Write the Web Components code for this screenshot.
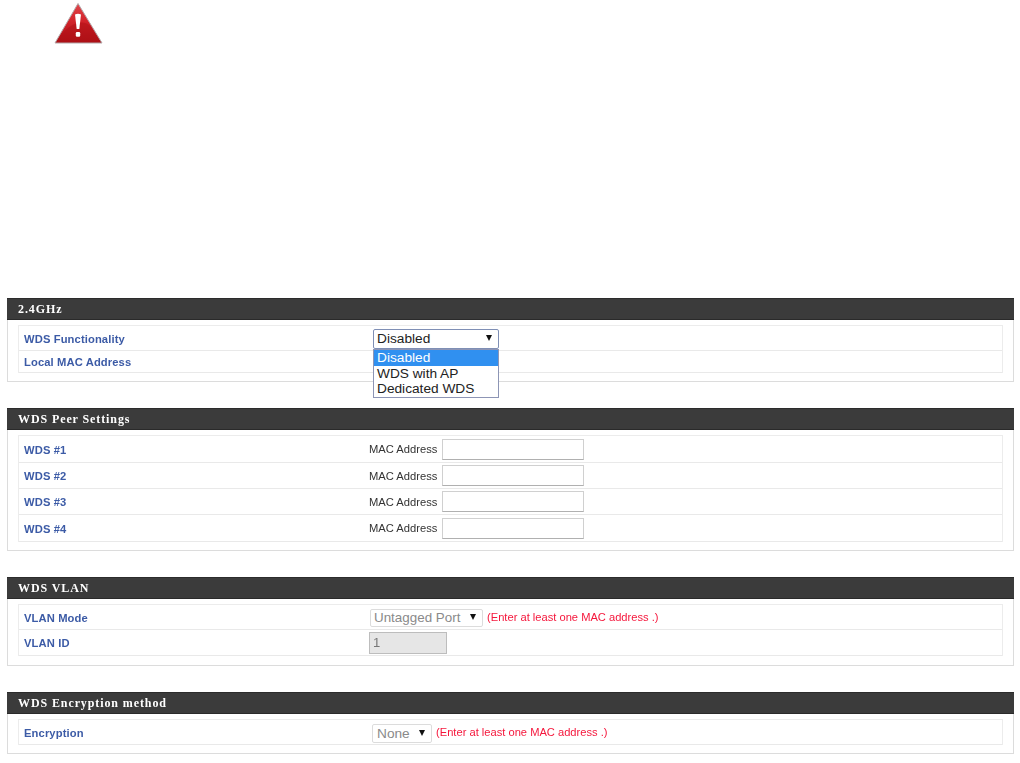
<!DOCTYPE html>
<html lang="en"><head><meta charset="utf-8"><title>WDS settings</title>
<style>
html,body{margin:0;background:#fff}
body{font-family:"Liberation Sans",Arial,sans-serif}
</style></head><body>
<wds-page>
  <wds-warning slot="top"></wds-warning>
  <wds-panel heading="2.4GHz" style="--gap:26px">
    <wds-row label="WDS Functionality" style="--h:25px">
      <wds-select value="Disabled" style="--w:126px;--x:4px;--mt:2px" options="Disabled|WDS with AP|Dedicated WDS"></wds-select>
    </wds-row>
    <wds-row label="Local MAC Address" style="--h:22px"></wds-row>
  </wds-panel>
  <wds-panel heading="WDS Peer Settings" style="--gap:26px">
    <wds-row label="WDS #1" style="--h:27px"><wds-mac></wds-mac></wds-row>
    <wds-row label="WDS #2" style="--h:26px"><wds-mac></wds-mac></wds-row>
    <wds-row label="WDS #3" style="--h:26px"><wds-mac></wds-mac></wds-row>
    <wds-row label="WDS #4" style="--h:27px"><wds-mac></wds-mac></wds-row>
  </wds-panel>
  <wds-panel heading="WDS VLAN" style="--gap:26px;--pb:9px">
    <wds-row label="VLAN Mode" style="--h:25px">
      <wds-select value="Untagged Port" disabled style="--w:113px;--x:1px;--sh:18px;--fs:13.4px;--mt:2px;--ay:4px"></wds-select><wds-note>(Enter at least one MAC address .)</wds-note>
    </wds-row>
    <wds-row label="VLAN ID" style="--h:26px"><wds-field value="1"></wds-field></wds-row>
  </wds-panel>
  <wds-panel heading="WDS Encryption method" style="--gap:0px">
    <wds-row label="Encryption" style="--h:25px">
      <wds-select value="None" disabled style="--w:60px;--x:3px;--sh:19px;--mt:2px;--tp:4px"></wds-select><wds-note>(Enter at least one MAC address .)</wds-note>
    </wds-row>
  </wds-panel>
</wds-page>
<script>
function def(name, css, html){
  customElements.define(name, class extends HTMLElement{
    connectedCallback(){
      if(this.shadowRoot) return;
      const r=this.attachShadow({mode:'open'});
      r.innerHTML='<style>'+css+'</style>'+(typeof html==='function'?html(this):html);
    }
  });
}
def('wds-page',
  ':host{display:block;width:1020px;height:763px;overflow:hidden;filter:blur(.5px)}'+
  '.top{height:298px;box-sizing:border-box;padding:2px 0 0 54px}'+
  '.main{margin:0 6px 0 7px}',
  '<div class="top"><slot name="top"></slot></div><div class="main"><slot></slot></div>');
def('wds-warning',
  ':host{display:block;width:50px;height:44px}svg{display:block}',
  `<svg width="50" height="44" viewBox="0 0 50 44" role="img" aria-label="Warning">
    <defs><linearGradient id="g" x1="0" y1="0" x2="0" y2="1">
      <stop offset="0" stop-color="#e0474c"/><stop offset=".45" stop-color="#d2232a"/><stop offset="1" stop-color="#a80f15"/></linearGradient></defs>
    <path d="M24 1.5 L48 41 H1 Z" fill="url(#g)" stroke="#b3a8aa" stroke-width="1" stroke-linejoin="round"/>
    <path d="M7 33 C16 21 30 16 37 25 L45.5 40 H3 Z" fill="#b01016" opacity=".55"/>
    <path d="M21 12.5 Q24 11 27 12.5 L25.3 27 H22.7 Z" fill="#fff"/>
    <rect x="21.8" y="30" width="4.4" height="4.8" rx="1.2" fill="#fff"/>
  </svg>`);
def('wds-panel',
  ':host{display:block;margin-bottom:var(--gap,26px)}'+
  'h2{margin:0;height:22px;box-sizing:border-box;padding:0 11px;background:#3b3b3b;border-top:1px solid #2c2c2c;border-bottom:1px solid #2a2a2a;color:#fff;'+
  'font:bold 12px/20px "Liberation Serif","Times New Roman",serif;letter-spacing:.9px}'+
  '.body{border:1px solid #dcdcdc;border-top:0;padding:5px 10px var(--pb,8px)}'+
  '.table{border:1px solid #ececec;border-bottom:0}',
  h=>`<h2>${h.getAttribute('heading')}</h2><div class="body"><div class="table"><slot></slot></div></div>`);
def('wds-row',
  ':host{display:flex;align-items:center;height:var(--h,25px);box-sizing:border-box;border-bottom:1px solid #e9e9e9}'+
  '.l{flex:0 0 350px;padding:1px 0 0 5px;box-sizing:border-box;color:#3c5ba6;font:bold 11.2px/14px "Liberation Sans",Arial,sans-serif;letter-spacing:.12px}'+
  '.v{display:flex;align-items:center;flex:1;min-width:0}',
  h=>`<div class="l">${h.getAttribute('label')}</div><div class="v"><slot></slot></div>`);
def('wds-select',
  ':host{display:block;position:relative;flex:none;width:var(--w);height:var(--sh,20px);margin-left:var(--x,0);margin-top:var(--mt,0);box-sizing:border-box;border:1px solid #7f8fb5;border-radius:2px;background:#fff;'+
  'font:var(--fs,13.7px)/calc(var(--sh,20px) - 2px) "Liberation Sans",Arial,sans-serif;color:#222}'+
  ':host([disabled]){border-color:#dcdcdc;color:#8a8a8a}'+
  '.t{padding-left:var(--tp,3px);white-space:nowrap}'+
  '.a{position:absolute;right:6px;top:var(--ay,5px);width:0;height:0;border:3.5px solid transparent;border-top:6px solid #111;border-bottom:0}'+
  '.list{position:absolute;left:-1px;right:-1px;top:19px;background:#fff;border:1px solid #8d95b5;z-index:2;box-sizing:border-box;color:#222}'+
  '.o{height:15.6px;line-height:15.6px;padding-left:3px}.o.on{background:#3090f0;color:#fff}',
  h=>{const o=h.getAttribute('options');
    return `<div class="t">${h.getAttribute('value')}</div><div class="a"></div>`+
    (o?`<div class="list">${o.split('|').map((x,i)=>`<div class="o${i?'':' on'}">${x}</div>`).join('')}</div>`:'');});
def('wds-mac',
  ':host{display:flex;align-items:center;gap:5px}'+
  'span{font:11.2px/14px "Liberation Sans",Arial,sans-serif;color:#333}'+
  'input{display:block;width:142px;height:21px;box-sizing:border-box;margin:0;padding:0 3px;border:1px solid #d0d0d0;border-bottom-color:#b0b0b0;background:#fff}',
  '<span>MAC Address</span><input type="text" aria-label="MAC Address">');
def('wds-field',
  ':host{display:block;width:78px;height:22px;box-sizing:border-box;border:1px solid #bdbdbd;background:#e6e6e6;color:#777;font:13px/20px "Liberation Sans",Arial,sans-serif;padding-left:3px}',
  h=>h.getAttribute('value'));
def('wds-note',
  ':host{display:block;margin-left:4px;color:#f5173c;font:11.15px/14px "Liberation Sans",Arial,sans-serif;white-space:nowrap}',
  '<slot></slot>');
</script>
</body></html>
